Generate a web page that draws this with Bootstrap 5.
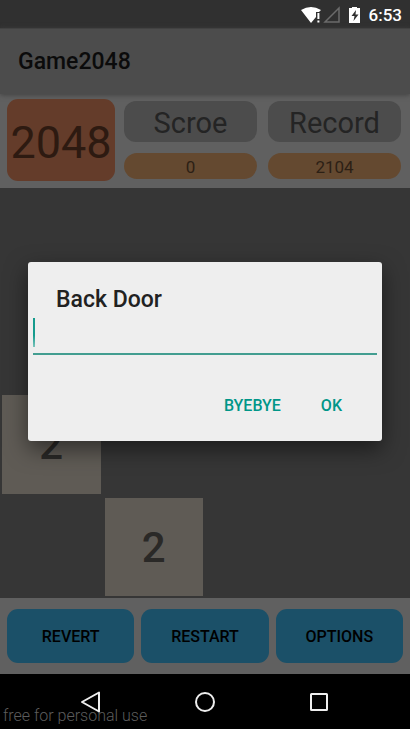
<!DOCTYPE html>
<html lang="en">
<head>
<meta charset="utf-8">
<meta name="viewport" content="width=device-width, initial-scale=1">
<title>Game2048</title>
<link href="https://cdn.jsdelivr.net/npm/bootstrap@5.3.0/dist/css/bootstrap.min.css" rel="stylesheet">
<style>
  body { font-family: Roboto, "Liberation Sans", sans-serif; background: #606060; color: #242424; line-height: 1; }
  .fw-mid { font-weight: 500; }
  .status-bar { background: #303030; height: 28px; font-size: 17px; padding: 2px 8px 0; }
  .app-bar { background: #4c4c4c; height: 66px; padding: 0 18px; box-shadow: 0 1px 5px #404040; border-top: 1px solid #424242; }
  .app-bar h1 { font-size: 23px; color: #0b0b0b; }
  .scores { padding: 5px 9px 7px 7px; gap: 9px; }
  .logo-box { background: #643c2a; color: #2d1a11; border-radius: 11px; width: 108px; height: 82px; font-size: 45px; padding-top: 4px; }
  .score-cols { gap: 11px; }
  .score-col { padding: 2px 0; gap: 11px; }
  .score-label { background: #4c4c4c; border-radius: 12px; height: 41px; font-size: 29px; padding-top: 4px; }
  .score-value { background: #644930; color: #2c2015; border-radius: 13px; height: 26px; font-size: 17px; padding-top: 2px; }
  .board { background: #363636; display: grid; grid-template-columns: repeat(4, 1fr); gap: 4px; padding: 2px; }
  .cell { aspect-ratio: 1; font-size: 42px; padding-top: 2px; }
  .tile { background: #5f5b55; color: #2a2927; }
  .actions { padding: 11px 7px; gap: 7px; }
  .actions .btn { background: #1b5068; color: #000; border: 0; border-radius: 11px; height: 54px; font-size: 16px; line-height: 1; padding: 2px 0 0; }
  .sys-nav { background: #000; height: 55px; padding: 0 64px; }
  .sys-nav button { height: 55px; line-height: 1; }
  .watermark { left: 3px; bottom: 5px; font-size: 16px; font-weight: 300; color: #5c5c5c; }
  .dialog-layer { padding: 0 28px; }
  .dialog { background: #eee; border-radius: 3px; box-shadow: 0 8px 22px rgba(0,0,0,.5); height: 179px; }
  .dialog h2 { font-size: 23px; color: #212121; padding: 26px 28px 6px; line-height: 24px; }
  .door-field { margin: 0 5px; border-bottom: 2px solid #429d90; }
  .caret { width: 2px; height: 29px; background: linear-gradient(#159b8d 60%, #7cc4bc); }
  .door-field input { height: 35px; border: 0; background: none; outline: 0; font-size: 19px; padding: 0 2px; }
  .dialog-actions { padding: 0 29px; margin-top: 32px; gap: 18px; }
  .dialog-actions .btn { color: #009688; font-size: 16px; line-height: 1; padding: 11px; border: 0; }
</style>
<script src="https://cdn.jsdelivr.net/npm/bootstrap@5.3.0/dist/js/bootstrap.bundle.min.js"></script>
</head>
<body class="min-vh-100 d-flex flex-column">
  <header class="status-bar d-flex align-items-center justify-content-end text-white fw-mid">
    <svg width="60" height="18" viewBox="0 0 60 18" class="me-2" aria-hidden="true">
      <path d="M0 4Q10-2 20 4L18 6H15V11L10 17Z" fill="#fff"/>
      <path d="M16.400 7h2v6h-2zM16.400 14.500h2v2h-2z" fill="#fff"/>
      <path d="M38 2V16H24Z" fill="none" stroke="#6b6b6b" stroke-width="1.500"/>
      <path d="M48 2h3V1h5v1h3v15H48Z" fill="#fff"/>
      <path d="M55 4L50.500 10H53.500L52.500 15L57.500 8.500H54.500Z" fill="#303030"/>
    </svg>
    <span>6:53</span>
  </header>

  <main class="position-relative">
    <div class="app-bar d-flex align-items-center"><h1 class="fw-mid m-0">Game2048</h1></div>

    <section class="scores d-flex">
      <div class="logo-box d-flex align-items-center justify-content-center">2048</div>
      <div class="score-cols d-flex flex-grow-1">
        <div class="score-col d-flex flex-column w-50">
          <div class="score-label d-flex align-items-center justify-content-center">Scroe</div>
          <div class="score-value d-flex align-items-center justify-content-center">0</div>
        </div>
        <div class="score-col d-flex flex-column w-50">
          <div class="score-label d-flex align-items-center justify-content-center">Record</div>
          <div class="score-value d-flex align-items-center justify-content-center">2104</div>
        </div>
      </div>
    </section>

    <section class="board" aria-label="Board">
      <div class="cell"></div><div class="cell"></div><div class="cell"></div><div class="cell"></div>
      <div class="cell"></div><div class="cell"></div><div class="cell"></div><div class="cell"></div>
      <div class="cell tile fw-mid d-flex align-items-center justify-content-center">2</div><div class="cell"></div><div class="cell"></div><div class="cell"></div>
      <div class="cell"></div><div class="cell tile fw-mid d-flex align-items-center justify-content-center">2</div><div class="cell"></div><div class="cell"></div>
    </section>

    <section class="actions d-flex">
      <button type="button" class="btn fw-mid w-100">REVERT</button>
      <button type="button" class="btn fw-mid w-100">RESTART</button>
      <button type="button" class="btn fw-mid w-100">OPTIONS</button>
    </section>

    <div class="dialog-layer position-absolute top-0 start-0 w-100 h-100 d-flex align-items-center">
      <form class="dialog w-100" role="dialog" aria-labelledby="door-title">
        <h2 class="fw-mid m-0" id="door-title">Back Door</h2>
        <div class="door-field d-flex">
          <span class="caret"></span>
          <input type="text" class="flex-grow-1" aria-labelledby="door-title">
        </div>
        <div class="dialog-actions d-flex justify-content-end">
          <button type="button" class="btn fw-mid">BYEBYE</button>
          <button type="button" class="btn fw-mid">OK</button>
        </div>
      </form>
    </div>
  </main>

  <nav class="sys-nav position-relative flex-grow-1 d-flex justify-content-between" aria-label="System">
    <span class="watermark position-absolute">free for personal use</span>
    <button type="button" class="btn border-0 p-0 px-3 position-relative" aria-label="Back">
      <svg width="22" height="22" viewBox="0 0 22 22"><path d="M19 1.500V20.500L2 11Z" fill="none" stroke="#eee" stroke-width="2" stroke-linejoin="round"/></svg>
    </button>
    <button type="button" class="btn border-0 p-0 px-3" aria-label="Home">
      <svg width="22" height="22" viewBox="0 0 22 22"><circle cx="11" cy="11" r="9" fill="none" stroke="#eee" stroke-width="2"/></svg>
    </button>
    <button type="button" class="btn border-0 p-0 px-3" aria-label="Recents">
      <svg width="22" height="22" viewBox="0 0 22 22"><rect x="3" y="3" width="16" height="16" rx=".5" fill="none" stroke="#eee" stroke-width="2"/></svg>
    </button>
  </nav>
</body>
</html>
